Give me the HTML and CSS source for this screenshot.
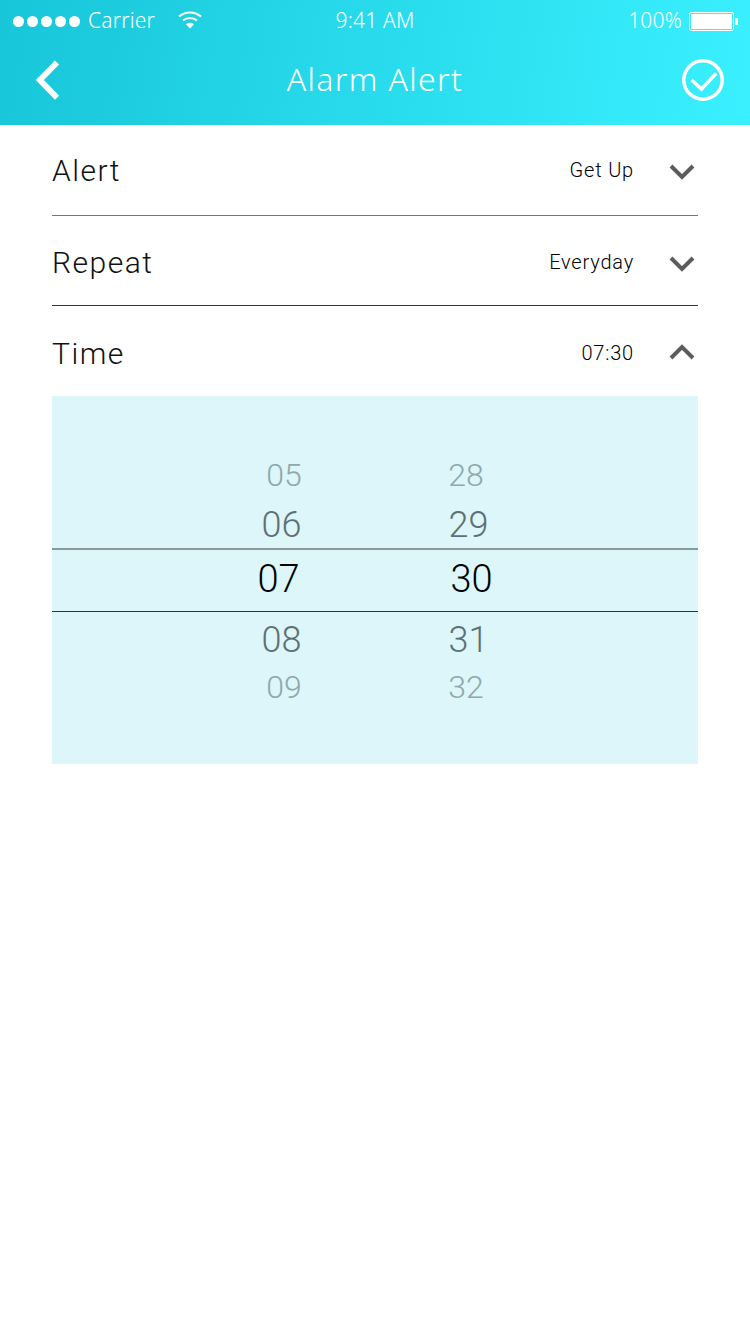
FILE: index.html
```html
<!DOCTYPE html>
<html lang="en">
<head>
<meta charset="UTF-8">
<meta name="viewport" content="width=device-width, initial-scale=1.0">
<title>Alarm Alert</title>
<link rel="stylesheet" href="styles.css">
</head>
<body>

<header class="top">
    <div class="status">
        <div class="status-left">
            <span class="dots"><i></i><i></i><i></i><i></i><i></i></span>
            <span class="carrier">Carrier</span>
            <svg class="wifi" width="26" height="20" viewBox="0 0 26 20">
                <path d="M2 6.500C8.500 1 17.500 1 24 6.500" fill="none" stroke="#fff" stroke-width="2"/>
                <path d="M6 10.500C10 7.300 16 7.300 20 10.500" fill="none" stroke="#fff" stroke-width="2"/>
                <path d="M9 14.200C11.500 12.300 14.500 12.300 17 14.200L13 18.500Z" fill="#fff"/>
            </svg>
        </div>
        <span class="clock">9:41 AM</span>
        <div class="status-right">
            <span class="percent">100%</span>
            <span class="battery"><span class="battery-fill"></span></span>
            <span class="battery-tip"></span>
        </div>
    </div>
    <div class="navbar">
        <svg class="nav-icon nav-back" width="44" height="44" viewBox="0 0 44 44">
            <path d="M23.500 3.500L6 21.500L23.500 39.500" transform="translate(5 1) scale(0.98)" fill="none" stroke="#fff" stroke-width="6"/>
        </svg>
        <h1>Alarm Alert</h1>
        <svg class="nav-icon" width="44" height="44" viewBox="0 0 44 44">
            <circle cx="22" cy="22" r="19.200" fill="none" stroke="#fff" stroke-width="3.500"/>
            <path d="M10.500 22L20.500 31L35 15.500" fill="none" stroke="#fff" stroke-width="3.500"/>
        </svg>
    </div>
</header>

<main class="content">
    <div class="row">
        <span class="row-label">Alert</span>
        <span class="row-value">Get Up</span>
        <svg class="chevron" width="26" height="16" viewBox="0 0 26 16"><path d="M2 2L13 13L24 2" fill="none" stroke="#5c5c5c" stroke-width="4"/></svg>
    </div>
    <div class="row row-dark">
        <span class="row-label">Repeat</span>
        <span class="row-value">Everyday</span>
        <svg class="chevron" width="26" height="16" viewBox="0 0 26 16"><path d="M2 2L13 13L24 2" fill="none" stroke="#5c5c5c" stroke-width="4"/></svg>
    </div>
    <div class="row row-last">
        <span class="row-label">Time</span>
        <span class="row-value">07:30</span>
        <svg class="chevron chevron-up" width="26" height="16" viewBox="0 0 26 16"><path d="M2 14L13 3L24 14" fill="none" stroke="#5c5c5c" stroke-width="4"/></svg>
    </div>

    <!-- hour and minute wheel -->
    <div class="picker">
        <div class="wheel-row far"><span>05</span><span>28</span></div>
        <div class="wheel-row near near-above"><span>06</span><span>29</span></div>
        <div class="wheel-row current"><span>07</span><span>30</span></div>
        <div class="wheel-row near near-below"><span>08</span><span>31</span></div>
        <div class="wheel-row far far-below"><span>09</span><span>32</span></div>
    </div>
</main>

</body>
</html>
```

FILE: styles.css
```css
body {
    font-family: Roboto, sans-serif;
    margin: 0;
    padding: 0;
    background-color: #fff;
    color: #111;
}

/* Gradient header */
.top {
    height: 125px;
    background: linear-gradient(100deg, #17c6d8 0%, #3af0ff 100%);
    color: #fff;
    font-family: "Noto Sans", sans-serif;
}

.status {
    height: 42px;
    display: grid;
    grid-template-columns: 1fr auto 1fr;
    align-items: center;
    padding: 0 13px;
    font-size: 21px;
    font-weight: 300;
    letter-spacing: 0.2px;
}

.status-left {
    display: flex;
    align-items: center;
}

.dots {
    display: flex;
    gap: 3px;
    margin-right: 8px;
}

.dots i {
    width: 11px;
    height: 11px;
    border-radius: 50%;
    background-color: #fff;
}

.wifi {
    margin-left: 22px;
    margin-top: -2px;
}

.carrier,
.clock,
.percent {
    padding-bottom: 2px;
}

.status-right {
    display: flex;
    align-items: center;
    justify-content: flex-end;
    margin-right: -1px;
}

.percent {
    margin-right: 7px;
}

.battery {
    width: 45px;
    height: 19px;
    box-sizing: border-box;
    border: 1px solid #fff;
    border-radius: 2px;
    padding: 1px;
    display: flex;
}

.battery-fill {
    flex: 1;
    background-color: #fff;
}

.battery-tip {
    width: 3px;
    height: 7px;
    margin-left: 1px;
    background-color: #fff;
}

.navbar {
    height: 76px;
    display: flex;
    align-items: center;
    justify-content: space-between;
    padding: 0 25px 0 29px;
}

.nav-icon {
    flex: none;
}

.nav-back {
    margin-right: -4px;
}

h1 {
    margin: 0 0 3px;
    font-size: 32px;
    font-weight: 300;
    letter-spacing: 1.35px;
}

/* Settings rows */
.content {
    margin: 0 52px;
}

.row {
    height: 91px;
    box-sizing: border-box;
    display: flex;
    align-items: center;
    border-bottom: 1px solid #777;
}

.row-dark {
    height: 90px;
    padding-top: 3px;
    border-bottom-color: #333;
}

.row-last {
    height: 90px;
    padding-top: 4px;
    border-bottom: none;
}

.row-label {
    flex: 1;
    font-size: 30px;
    font-weight: 300;
    letter-spacing: 1.5px;
}

.row-value {
    font-size: 20px;
    font-weight: 300;
    color: #000;
    letter-spacing: 0.8px;
}

.chevron {
    margin-left: 35px;
    margin-right: 3px;
    margin-top: 3px;
}

.chevron-up {
    margin-top: -2px;
}

/* Time picker */
.picker {
    height: 368px;
    box-sizing: border-box;
    padding-top: 55px;
    background-color: #dcf6f9;
}

.wheel-row {
    display: flex;
    justify-content: center;
    box-sizing: border-box;
    align-items: center;
    font-weight: 300;
}

.wheel-row span {
    width: 60px;
    text-align: center;
}

.far {
    height: 48px;
    gap: 122px;
    font-size: 32px;
    color: #8fa8ab;
}

.far-below {
    padding-top: 2px;
}

.near {
    height: 49px;
    gap: 127px;
    font-size: 36px;
    color: #5f7073;
}

.near-above {
    padding-top: 2px;
}

.near-below {
    height: 50px;
    padding-top: 6px;
}

.current {
    height: 64px;
    padding-bottom: 4px;
    gap: 133px;
    font-size: 38px;
    color: #000;
    border-top: 2px solid #8a9799;
    border-bottom: 1px solid #333;
}
```
